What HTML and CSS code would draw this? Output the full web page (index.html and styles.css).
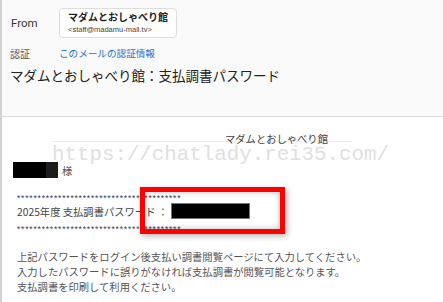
FILE: index.html
```
<!DOCTYPE html>
<html>
<head>
    <meta charset="utf-8">
    <title>マダムとおしゃべり館：支払調書パスワード</title>
    <link rel="stylesheet" href="styles.css">
</head>

<body>
<div class="mail">
    <div class="mail_head">
        <div class="row from_row">
            <span class="label label_from">From</span>
            <div class="sender">
                <div class="sender_name">マダムとおしゃべり館</div>
                <div class="sender_mail">&lt;staff@madamu-mail.tv&gt;</div>
            </div>
        </div>
        <div class="row auth_row">
            <span class="label">認証</span>
            <a class="auth_link" href="#">このメールの認証情報</a>
        </div>
        <h1 class="subject">マダムとおしゃべり館：支払調書パスワード</h1>
    </div>

    <div class="mail_body">
        <div class="watermark">https://chatlady.rei35.com/</div>
        <p class="shop">マダムとおしゃべり館</p>
        <p class="to"><span class="redact redact_name"></span>様</p>
        <p class="stars stars_top">****************************************</p>
        <p class="pass">2025年度 支払調書パスワード ：<span class="redact redact_pass"></span></p>
        <p class="stars stars_bottom">****************************************</p>
        <p class="note">
            上記パスワードをログイン後支払い調書閲覧ページにて入力してください。<br>
            入力したパスワードに誤りがなければ支払調書が閲覧可能となります。<br>
            支払調書を印刷して利用ください。
        </p>
        <div class="mark"></div>
    </div>
</div>
</body>
</html>
```

FILE: styles.css
```
body {
    margin: 0;
    background-color: #ffffff;
    font-family: "Noto Sans CJK JP", "Liberation Sans", sans-serif;
    color: #333333;
}

div.mail {
    height: 302px;
    border-left: 2px solid #d2d2d2;
    overflow: hidden;
}

div.mail_head {
    height: 117px;
    background-color: #fafafa;
    border-bottom: 1px solid #dcdcdc;
    padding: 8px 0 0 8px;
    box-sizing: border-box;
}

div.row {
    display: flex;
    align-items: center;
}

.label {
    width: 49px;
    font-size: 10px;
    color: #555555;
}

.label_from {
    font-family: Roboto, "Liberation Sans", sans-serif;
    font-size: 11.5px;
    color: #333333;
    padding-left: 1px;
    width: 48px;
}

div.sender {
    height: 30px;
    box-sizing: border-box;
    padding: 1px 8px 0 8px;
    background-color: #ffffff;
    border: 1px solid #dddddd;
    border-radius: 4px;
}

div.sender_name {
    font-size: 10px;
    font-weight: bold;
    line-height: 14px;
    color: #222222;
}

div.sender_mail {
    font-family: "Liberation Sans", sans-serif;
    font-size: 7.5px;
    line-height: 12px;
    color: #444444;
}

div.auth_row {
    margin-top: 8px;
    height: 14px;
}

a.auth_link {
    font-size: 9.6px;
    color: #1a6fd1;
    text-decoration: none;
}

h1.subject {
    margin: 6px 0 0 0;
    font-size: 13.5px;
    font-weight: normal;
    line-height: 18px;
    color: #222222;
}

div.mail_body {
    position: relative;
    padding: 15px 0 0 15px;
    font-size: 10.3px;
    color: #555555;
}

div.mail_body p {
    margin: 0;
}

div.watermark {
    position: absolute;
    left: 50px;
    top: 24px;
    font-family: "Liberation Mono", monospace;
    font-size: 20.8px;
    line-height: 26px;
    color: #e0e0e0;
    border-top: 1px solid #efefef;
    width: 300px;
    white-space: nowrap;
}

p.shop {
    margin-left: 208px !important;
    line-height: 14px;
    color: #444444;
    position: relative;
}

p.to {
    display: flex;
    align-items: center;
    margin: 15px 0 0 -4px !important;
    height: 18px;
    color: #555555;
    position: relative;
}

.redact {
    display: inline-block;
    background-color: #000000;
}

.redact_name {
    width: 33px;
    height: 16px;
    border-right: 12px solid #1c1c1c;
    margin-right: 4px;
}

p.stars {
    font-family: "Liberation Sans", sans-serif;
    font-size: 8.5px;
    letter-spacing: 0.8px;
    line-height: 8px;
    color: #33405e;
    position: relative;
}

p.stars_top {
    margin-top: 15px !important;
}

p.stars_bottom {
    margin-top: 5px !important;
}

p.pass {
    display: flex;
    align-items: center;
    height: 18px;
    color: #444444;
    position: relative;
}

.redact_pass {
    width: 77px;
    height: 14px;
    border: 1px solid #777777;
    margin-left: 3px;
}

p.note {
    margin-top: 16px !important;
    line-height: 15px;
    color: #555555;
    position: relative;
}

div.mark {
    position: absolute;
    left: 138px;
    top: 70px;
    width: 135px;
    height: 37px;
    border: 5px solid #ff0000;
    box-shadow: 2px 2px 6px rgba(0, 0, 0, 0.3), inset 0 0 6px rgba(0, 0, 0, 0.25);
}
```
